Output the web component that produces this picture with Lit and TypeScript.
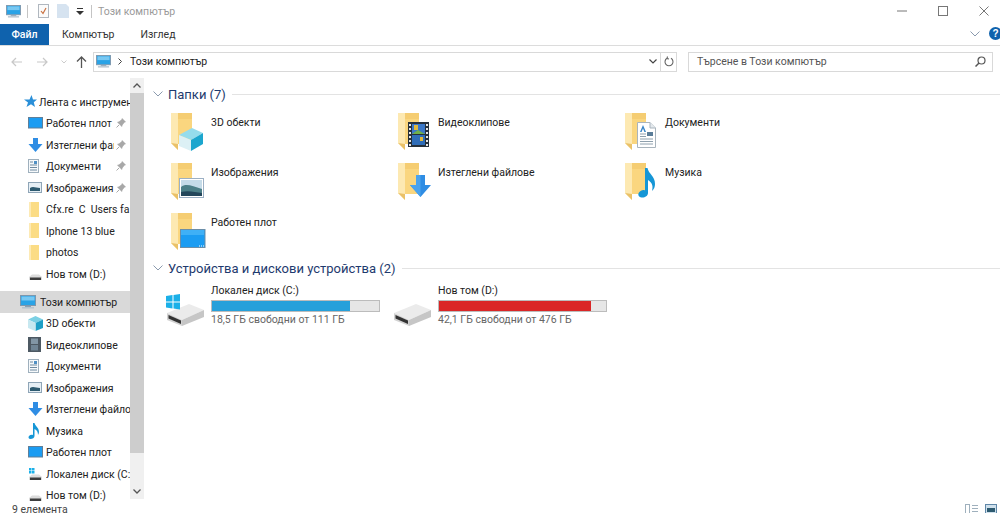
import { LitElement, html, css, svg } from "lit";
import { customElement } from "lit/decorators.js";

const pcIcon = (w: number, h: number) => html`<svg width=${w} height=${h} viewBox="0 0 16 14"><rect x=".5" y=".5" width="15" height="10" fill="#2aa3e6" stroke="#7d97ad"/><rect x="1.5" y="1.5" width="13" height="4" fill="#78c8f2"/><rect x="5" y="11" width="6" height="1" fill="#8aa0b2"/><rect x="2" y="12" width="12" height="1.5" fill="#b6c4cf"/></svg>`;

const folderBase = svg`
  <path d="M1 0H22V31H8L1 25Z" fill="#f5cd72"/>
  <path d="M1 0H8V37L1 30Z" fill="#fde9b2"/>
  <path d="M8 6H22V31H8Z" fill="#fad67f"/>
  <path d="M1 30L8 37V31Z" fill="#eac168"/>`;

const overlays: Record<string, unknown> = {
  cube: svg`<path d="M9 22L22 15L33 20L21 27Z" fill="#95dcec"/><path d="M21 27L33 20V31L21 38Z" fill="#1ca6ce"/><path d="M9 22L21 27V38L9 33Z" fill="#dcf0f5"/>`,
  film: svg`<rect x="11" y="9" width="21" height="25" fill="#26303a"/><rect x="15" y="11" width="13" height="10" fill="#3b78c8"/><rect x="15" y="22" width="13" height="10" fill="#2f6db8"/><path d="M17 12h4v5h-4zM23 24h3v4h-3z" fill="#e2b93a"/><path d="M15 21l6-4 7 4z" fill="#6fb04a"/><path d="M12 11h2v2h-2zM12 15h2v2h-2zM12 19h2v2h-2zM12 23h2v2h-2zM12 27h2v2h-2zM12 31h2v2h-2zM29 11h2v2h-2zM29 15h2v2h-2zM29 19h2v2h-2zM29 23h2v2h-2zM29 27h2v2h-2zM29 31h2v2h-2z" fill="#e8e8e8"/>`,
  doc: svg`<path d="M13.5 9.5H26L31.5 15V34.5H13.5Z" fill="#fff" stroke="#a9b4bd"/><path d="M26 9.5V15H31.5" fill="#e4e9ed" stroke="#a9b4bd"/><path d="M16 19l3-7 3 7h-1.6l-1.4-3.5-1.4 3.5z" fill="#3a86c8"/><rect x="23" y="19" width="6" height="4" fill="#5b7d99"/><path d="M16 21h6M16 23.5h6M16 26h13M16 28.5h13M16 31h13" stroke="#8fa0ad" stroke-width="1"/>`,
  img: svg`<rect x="9.5" y="15.5" width="24" height="19" fill="#fff" stroke="#9cb0c4"/><rect x="11" y="17" width="21" height="16" fill="#c5dbe8"/><path d="M11 24C16 20 22 23 32 26V33H11Z" fill="#4c7f87"/><path d="M11 29C18 27 25 29 32 30V33H11Z" fill="#23465a"/>`,
  dl: svg`<path d="M19 12H28V22H34L23.5 34L13 22H19Z" fill="#2f8de4"/><path d="M19 12H23.5V34L13 22H19Z" fill="#4aa3ee"/>`,
  music: svg`<path d="M21 5H23.5C24.5 11 31 13 31 21C31 24 30 26 28 28C29 24 29 20 24 17V30C24 33 20.5 35 17.5 34.5C14.5 34 13.5 31.5 15 29.5C16.5 27.5 19 26.5 21 27.5Z" fill="#1596d6"/>`,
  desk: svg`<rect x="10.5" y="16.5" width="24.5" height="18" fill="#1b9cf2" stroke="#6b8ea8"/><rect x="11" y="17" width="23" height="5" fill="#3fb0f6"/><path d="M29 33h1M31 33h1M33 33h1" stroke="#fff"/>`,
};

const folder = (k: string) => html`<svg class="big" width="40" height="40" viewBox="1 0 40 40">${folderBase}${overlays[k]}</svg>`;

const drive = (win: boolean) => html`<svg class="drv" width="40" height="34" viewBox="0 0 40 34">
  <path d="M2 19L24 10L39 16L17 26Z" fill="#ebebeb"/>
  <path d="M2 19L17 26V32L2 26Z" fill="#d2d2d2"/>
  <path d="M3.500 21L16 26.500V30L3.500 24.500Z" fill="#333"/>
  <path d="M17 26L39 16V23L17 32Z" fill="#c6c6c6"/>
  ${win ? svg`<path d="M1 2L7.500 1V7.500H1ZM8.500 1L15 0V7.500H8.500ZM1 8.500H7.500V14.500L1 13.500ZM8.500 8.500H15V15.500L8.500 14.500Z" fill="#1bb0e8"/>` : ""}
</svg>`;

const miniDrive = (win = false) => html`<svg width="15" height="14" viewBox="0 0 15 14">
  ${win ? svg`<path d="M1 1h2.500v2.500H1zM4 1h2.500v2.500H4zM1 4h2.500v2.500H1zM4 4h2.500v2.500H4z" fill="#1bb0e8"/>` : ""}
  <path d="M1 10L4 7.500H11L14 10V13H1Z" fill="#dcdcdc"/><rect x="2" y="10.500" width="11" height="2.500" fill="#3c3c3c"/></svg>`;

const s: Record<string, unknown> = {
  star: html`<svg width="13" height="13" viewBox="0 0 13 13"><path d="M7.500 0L9 4.500H13L9.800 7.200L11 12L7 9.300L2.500 12L4 7.500L0 4.500H5.500Z" fill="#2a8fd8"/></svg>`,
  desk: html`<svg width="15" height="12" viewBox="0 0 15 12"><rect x=".5" y=".5" width="14" height="10.500" fill="#1b9cf2" stroke="#5f7f99"/></svg>`,
  dl: html`<svg width="15" height="14" viewBox="0 0 15 14"><path d="M5 0H10V6H14.500L7.500 14L.5 6H5Z" fill="#2f8de4"/></svg>`,
  doc: html`<svg width="11" height="14" viewBox="0 0 11 14"><rect x=".5" y=".5" width="10" height="13" fill="#f6f9fb" stroke="#9fb0bd"/><path d="M2 3h3M2 6h7M2 8.500h7M2 11h7" stroke="#6f8aa0"/><rect x="6" y="2" width="3" height="3" fill="#4f90c4"/></svg>`,
  img: html`<svg width="14" height="11" viewBox="0 0 14 11"><rect x=".5" y=".5" width="13" height="10" fill="#e6eff5" stroke="#8fa5b7"/><path d="M2 6C5 4 8 6 12 6V9H2Z" fill="#2d5a70"/></svg>`,
  fold: html`<svg width="12" height="15" viewBox="0 0 12 15"><path d="M1 0H11V15H1Z" fill="#fbdc85"/><rect x="1" y="0" width="2" height="15" fill="#fdeab5"/></svg>`,
  drive: miniDrive(),
  cdrive: miniDrive(true),
  cube: html`<svg width="15" height="15" viewBox="0 0 15 15"><path d="M0 3.500L7.500 0L15 3.500L7.500 7Z" fill="#7bd0e4"/><path d="M7.500 7L15 3.500V12L7.500 15Z" fill="#1e9fc6"/><path d="M0 3.500L7.500 7V15L0 12Z" fill="#c7e8f0"/></svg>`,
  film: html`<svg width="13" height="15" viewBox="0 0 13 15"><rect width="13" height="15" fill="#4d5963"/><rect x="3" y="1.500" width="7" height="5.500" fill="#8296a5"/><rect x="3" y="8" width="7" height="5.500" fill="#6f8494"/></svg>`,
  note: html`<svg width="12" height="16" viewBox="0 0 12 16"><path d="M5 0H6.500C7 3 11 4.500 11 9C11 10 10.500 11 10 12C10 9 9 7 6.500 6V13C6.500 15 4.500 16 2.500 16C.5 16 0 14.500 1 13C2 12 3.500 11.500 5 12Z" fill="#1596d6"/></svg>`,
};

const quick = [
  ["desk", "Работен плот", 1], ["dl", "Изтеглени файлове", 1], ["doc", "Документи", 1], ["img", "Изображения", 1],
  ["fold", "Cfx.re  C  Users fa", 0], ["fold", "Iphone 13 blue", 0], ["fold", "photos", 0], ["drive", "Нов том (D:)", 0],
] as const;
const pc = [
  ["cube", "3D обекти"], ["film", "Видеоклипове"], ["doc", "Документи"], ["img", "Изображения"],
  ["dl", "Изтеглени файлове"], ["note", "Музика"], ["desk", "Работен плот"], ["cdrive", "Локален диск (C:)"], ["drive", "Нов том (D:)"],
] as const;
const tiles = [
  ["cube", "3D обекти"], ["film", "Видеоклипове"], ["doc", "Документи"],
  ["img", "Изображения"], ["dl", "Изтеглени файлове"], ["music", "Музика"],
  ["desk", "Работен плот"],
] as const;

const chevron = html`<svg class="chev" width="10" height="6" viewBox="0 0 10 6"><path d="M.5 .5L5 5L9.500 .5" fill="none" stroke="#8a9aae"/></svg>`;
const pin = html`<svg class="pin" width="10" height="10" viewBox="0 0 10 10"><path d="M6 0L10 4L8.500 4.500L6.500 7L6 9L1 4L3 3.500L5.500 1.500Z" fill="#a8a8a8"/><path d="M3 7L.5 9.500" stroke="#a8a8a8"/></svg>`;

@customElement("app-root")
export class AppRoot extends LitElement {
  static styles = css`
    :host { display: block; width: 1000px; height: 513px; overflow: hidden; background: #fff; font: 10.500px Roboto, "Noto Sans", sans-serif; color: #1a1a1a; }
    svg { display: block; flex: none; }
    .title { height: 22px; display: flex; align-items: center; padding-left: 6px; }
    .sep { width: 1px; height: 13px; background: #c4c4c4; }
    .titletext { color: #9a9a9a; margin-left: 6px; flex: 1; }
    .winbtns { display: flex; align-items: center; gap: 31px; padding-right: 11px; }
    .tabs { height: 23px; display: flex; align-items: stretch; border-bottom: 1px solid #dcdcdc; margin-bottom: 5px; }
    .tab { display: flex; align-items: center; color: #333; padding-top: 1px; }
    .file { width: 49px; background: #0f62ad; color: #fff; justify-content: center; font-weight: 500; margin-top: 2px; padding-top: 0; }
    .tabs .sp { flex: 1; }
    .tabr { display: flex; align-items: center; gap: 9px; }
    .help { width: 13px; height: 13px; margin-right: -2px; border-radius: 50%; background: #0f62ad; color: #fff; font: bold 10px "Liberation Sans", sans-serif; display: flex; align-items: center; justify-content: center; }
    .nav { height: 21px; display: flex; align-items: center; }
    .navbtns { width: 93px; display: flex; align-items: center; padding-left: 11px; box-sizing: border-box; }
    .addr { width: 584px; height: 20px; box-sizing: border-box; border: 1px solid #d9d9d9; display: flex; align-items: center; padding-left: 2px; }
    .addr .path { flex: 1; margin-left: 7px; display: flex; align-items: center; gap: 8px; color: #222; }
    .addr .ctl { width: 15px; height: 100%; display: flex; align-items: center; justify-content: center; }
    .addr .ctl + .ctl { border-left: 1px solid #d9d9d9; }
    .search { width: 305px; height: 20px; margin-left: 11px; box-sizing: border-box; border: 1px solid #d9d9d9; display: flex; align-items: center; justify-content: space-between; padding: 0 6px 0 8px; color: #555; }
    .main { height: 424px; margin-top: 6px; display: flex; overflow: hidden; }
    .side { width: 130px; flex: none; overflow: hidden; padding-top: 13px; box-sizing: border-box; }
    .row { height: 21.500px; display: flex; align-items: center; white-space: pre; overflow: hidden; color: #222; }
    .row .ic { width: 18px; margin-left: 28px; display: flex; justify-content: flex-start; flex: none; }
    .row.top .ic { margin-left: 24px; width: 15px; }
    .row .tx { overflow: hidden; flex: 1; padding-top: 1px; }
    .row .pin { margin: 0 4px 0 2px; }
    .row.sel { background: #d9d9d9; margin-top: 6.500px; }
    .row.pcrow .ic { margin-left: 20px; width: 20px; }
    .bar { width: 14px; flex: none; background: #f0f0f0; display: flex; flex-direction: column; margin-bottom: 3px; }
    .arrow { height: 15px; display: flex; align-items: center; justify-content: center; }
    .thumb { background: #cdcdcd; height: 360px; }
    .fill { flex: 1; }
    .content { flex: 1; padding: 7px 0 0 9px; min-width: 0; }
    .hdr { display: flex; align-items: center; height: 18px; color: #1e3a6e; font-size: 13px; white-space: nowrap; }
    .hdr .chev { margin-right: 5px; }
    .hdr .line { flex: 1; height: 1px; background: #e3e3e3; margin-left: 6px; }
    .grid { display: grid; grid-template-columns: repeat(3, 227px); grid-auto-rows: 50px; margin: 10px 0 0 18px; }
    .tile { display: flex; }
    .tile .name { line-height: 18px; padding-top: 1px; color: #222; }
    .drives { display: flex; margin: 6px 0 0 12px; }
    .drive { width: 227px; display: flex; }
    .drv { margin-top: 11px; margin-right: 6px; }
    .dname { line-height: 15px; color: #222; }
    .meter { width: 169px; height: 12px; box-sizing: border-box; border: 1px solid #bcbcbc; background: #e6e6e6; margin: 2px 0 0; }
    .meter div { height: 100%; }
    .dsub { color: #666; line-height: 15px; }
    .status { height: 14px; display: flex; align-items: center; justify-content: space-between; padding: 0 3px 0 12px; color: #444; }
    .views { display: flex; gap: 7px; }
  `;

  render() {
    return html`
      <div class="title">
        ${pcIcon(15, 13)}
        <div class="sep" style="margin:0 10px 0 6px"></div>
        <svg width="11" height="14" viewBox="0 0 11 14"><rect x=".5" y=".5" width="10" height="13" fill="#fbfbfb" stroke="#b0b7bf"/><path d="M3 7l2 2.500L8 4" fill="none" stroke="#c9703f" stroke-width="1.200"/></svg>
        <svg style="margin-left:8px" width="12" height="14" viewBox="0 0 12 14"><path d="M0 0H9L12 3V14H0Z" fill="#d6e3f0"/></svg>
        <svg style="margin:0 7px 0 7px" width="8" height="7" viewBox="0 0 8 7"><rect x="1" y="0" width="6" height="1" fill="#333"/><path d="M0 3H8L4 7Z" fill="#333"/></svg>
        <div class="sep"></div>
        <div class="titletext">Този компютър</div>
        <div class="winbtns">
          <svg width="10" height="10" viewBox="0 0 10 10"><path d="M0 5H10" stroke="#777"/></svg>
          <svg width="10" height="10" viewBox="0 0 10 10"><rect x=".5" y=".5" width="9" height="9" fill="none" stroke="#777"/></svg>
          <svg width="10" height="10" viewBox="0 0 10 10"><path d="M.5 .5L9.500 9.500M9.500 .5L.5 9.500" stroke="#777"/></svg>
        </div>
      </div>
      <div class="tabs">
        <div class="tab file">Файл</div>
        <div class="tab" style="margin-left:13px">Компютър</div>
        <div class="tab" style="margin-left:26px">Изглед</div>
        <div class="sp"></div>
        <div class="tabr">
          ${chevron}
          <div class="help">?</div>
        </div>
      </div>
      <div class="nav">
        <div class="navbtns">
          <svg width="12" height="10" viewBox="0 0 12 10"><path d="M11 5H1M5 1L1 5L5 9" fill="none" stroke="#c8c8c8" stroke-width="1.200"/></svg>
          <svg style="margin-left:13px" width="12" height="10" viewBox="0 0 12 10"><path d="M1 5H11M7 1L11 5L7 9" fill="none" stroke="#c8c8c8" stroke-width="1.200"/></svg>
          <svg style="margin-left:13px" width="6" height="4" viewBox="0 0 6 4"><path d="M.5 .5L3 3L5.500 .5" fill="none" stroke="#ccc"/></svg>
          <svg style="margin-left:9px" width="11" height="12" viewBox="0 0 11 12"><path d="M5.500 12V1M1 5.500L5.500 1L10 5.500" fill="none" stroke="#555" stroke-width="1.300"/></svg>
        </div>
        <div class="addr">
          ${pcIcon(15, 13)}
          <div class="path">
            <svg width="4" height="7" viewBox="0 0 4 7"><path d="M.5 .5L3.500 3.500L.5 6.500" fill="none" stroke="#444"/></svg>
            <span>Този компютър</span>
          </div>
          <div class="ctl"><svg width="8" height="5" viewBox="0 0 8 5"><path d="M.5 .5L4 4L7.500 .5" fill="none" stroke="#444" stroke-width="1.200"/></svg></div>
          <div class="ctl"><svg width="10" height="11" viewBox="0 0 10 11"><path d="M3 2.300A4 4 0 1 0 7 2.300M3.500 .5L3 2.500L5 3" fill="none" stroke="#666" stroke-width="1.100"/></svg></div>
        </div>
        <div class="search">
          <span>Търсене в Този компютър</span>
          <svg width="11" height="11" viewBox="0 0 11 11"><circle cx="6.500" cy="4.500" r="3.500" fill="none" stroke="#555" stroke-width="1.200"/><path d="M4 7L.5 10.500" stroke="#555" stroke-width="1.500"/></svg>
        </div>
      </div>
      <div class="main">
        <div class="side">
          <div class="row top"><span class="ic">${s.star}</span><span class="tx">Лента с инструменти</span></div>
          ${quick.map(([i, t, p]) => html`<div class="row"><span class="ic">${s[i]}</span><span class="tx">${t}</span>${p ? pin : ""}</div>`)}
          <div class="row sel pcrow"><span class="ic">${pcIcon(16, 14)}</span><span class="tx">Този компютър</span></div>
          ${pc.map(([i, t]) => html`<div class="row"><span class="ic">${s[i]}</span><span class="tx">${t}</span></div>`)}
        </div>
        <div class="bar">
          <div class="arrow"><svg width="8" height="5" viewBox="0 0 8 5"><path d="M.5 4.500L4 1L7.500 4.500" fill="none" stroke="#555" stroke-width="1.300"/></svg></div>
          <div class="thumb"></div>
          <div class="fill"></div>
          <div class="arrow"><svg width="8" height="5" viewBox="0 0 8 5"><path d="M.5 .5L4 4L7.500 .5" fill="none" stroke="#555" stroke-width="1.300"/></svg></div>
        </div>
        <div class="content">
          <div class="hdr">${chevron}<span>Папки (7)</span><div class="line"></div></div>
          <div class="grid">
            ${tiles.map(([k, n]) => html`<div class="tile">${folder(k)}<div class="name">${n}</div></div>`)}
          </div>
          <div class="hdr" style="margin-top:-4px">${chevron}<span>Устройства и дискови устройства (2)</span><div class="line"></div></div>
          <div class="drives">
            <div class="drive">${drive(true)}<div><div class="dname">Локален диск (C:)</div><div class="meter"><div style="width:82.500%;background:#26a0da"></div></div><div class="dsub">18,5 ГБ свободни от 111 ГБ</div></div></div>
            <div class="drive">${drive(false)}<div><div class="dname">Нов том (D:)</div><div class="meter"><div style="width:91%;background:#da2626"></div></div><div class="dsub">42,1 ГБ свободни от 476 ГБ</div></div></div>
          </div>
        </div>
      </div>
      <div class="status">
        <span>9 елемента</span>
        <div class="views">
          <svg width="13" height="10" viewBox="0 0 13 10"><rect x=".5" y=".5" width="4" height="9" fill="none" stroke="#9fb0bd"/><path d="M7 1.500h6M7 4.500h6M7 7.500h6" stroke="#9fb0bd"/></svg>
          <svg width="12" height="10" viewBox="0 0 12 10"><rect x=".5" y=".5" width="11" height="9" fill="#cfe0ec" stroke="#5f87a8"/><rect x="2" y="4" width="8" height="4" fill="#2d5a70"/></svg>
        </div>
      </div>
    `;
  }
}
